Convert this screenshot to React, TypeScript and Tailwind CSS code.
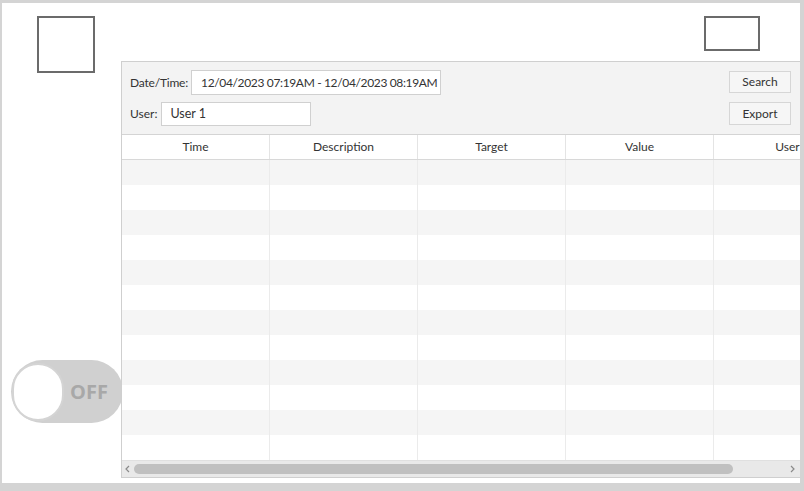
import React from "react";

const cols = ["Time", "Description", "Target", "Value", "User"];
const rows = Array.from({ length: 12 });

export default function App() {
  return (
    <div
      className="w-[804px] h-[491px] bg-[#d4d4d4] pt-[3px] pl-[2px] pr-[4px] pb-[8px] overflow-hidden"
      style={{ fontFamily: 'Lato, "Noto Sans", Arial, sans-serif' }}
    >
      <div className="relative w-full h-full bg-white overflow-hidden">
        {/* top-left square */}
        <div className="absolute left-[35px] top-[13px] w-[58px] h-[57px] border-2 border-[#6b6b6b]" />
        {/* top-right rect */}
        <div className="absolute left-[702px] top-[13px] w-[56px] h-[35px] border-2 border-[#6b6b6b]" />

        {/* toggle */}
        <div className="absolute left-[9px] top-[357px] w-[112px] h-[63px] rounded-full bg-[#d0d0d0] flex items-center pl-[1px]">
          <div className="w-[52px] h-[58px] rounded-full bg-white border-[2px] border-[#d4d4d4]" />
          <span
            className="ml-[6px] text-[20px] font-bold text-[#a8a8a8]"
            style={{ fontFamily: '"Open Sans", Arial, sans-serif' }}
          >
            OFF
          </span>
        </div>

        {/* panel */}
        <div className="absolute left-[119px] top-[58px] w-[680px] h-[417px] border border-[#cfcfcf] bg-[#f3f3f3] flex flex-col text-[12px] text-[#333]">
          {/* toolbar */}
          <div className="h-[73px] shrink-0 flex justify-between pl-[8px] pr-[9px] pt-[8px] border-b border-[#d4d4d4]">
            <div className="flex flex-col gap-[7px]">
              <div className="flex items-center gap-[3px] h-[25px] whitespace-nowrap">
                <span className="shrink-0 tracking-[-0.2px]">Date/Time:</span>
                <div className="w-[250px] h-[25px] shrink-0 bg-white border border-[#d0d0d0] flex items-center px-[9px] text-[12px] tracking-[-0.35px]">
                  12/04/2023 07:19AM - 12/04/2023 08:19AM
                </div>
              </div>
              <div className="flex items-center gap-[4px] h-[24px] whitespace-nowrap">
                <span className="shrink-0">User:</span>
                <div className="w-[150px] h-[24px] shrink-0 bg-white border border-[#d0d0d0] flex items-center px-[8px] text-[12.5px]">
                  User 1
                </div>
              </div>
            </div>
            <div className="flex flex-col gap-[9px] pt-[1px]">
              <div className="w-[62px] h-[22px] bg-[#f6f6f6] border border-[#d6d6d6] flex items-center justify-center">
                Search
              </div>
              <div className="w-[62px] h-[23px] bg-[#f6f6f6] border border-[#d6d6d6] flex items-center justify-center">
                Export
              </div>
            </div>
          </div>

          {/* table */}
          <div className="flex-1 bg-white flex flex-col overflow-hidden">
            <div className="flex h-[25px] border-b border-[#d8d8d8] shrink-0">
              {cols.map((c) => (
                <div
                  key={c}
                  className="w-[148px] shrink-0 flex items-center justify-center border-r border-[#e4e4e4]"
                >
                  {c}
                </div>
              ))}
            </div>
            <div className="flex-1 overflow-hidden">
              {rows.map((_, i) => (
                <div
                  key={i}
                  className={`flex h-[25px] ${i % 2 === 0 ? "bg-[#f5f5f5]" : "bg-white"}`}
                >
                  {cols.map((c) => (
                    <div key={c} className="w-[148px] shrink-0 border-r border-[#ebebeb]" />
                  ))}
                </div>
              ))}
            </div>
            {/* scrollbar */}
            <div className="h-[17px] shrink-0 bg-[#e9e9e9] border-t border-[#e0e0e0] flex items-center">
              <svg width="12" height="16" viewBox="0 0 12 16" className="shrink-0">
                <path d="M7 5 L4 8 L7 11" fill="none" stroke="#8a8a8a" strokeWidth="1.2" />
              </svg>
              <div className="w-[599px] h-[10px] rounded-full bg-[#c0c0c0] shrink-0" />
              <div className="flex-1" />
              <svg width="12" height="16" viewBox="0 0 12 16" className="shrink-0 mr-[2px]">
                <path d="M5 5 L8 8 L5 11" fill="none" stroke="#8a8a8a" strokeWidth="1.2" />
              </svg>
            </div>
          </div>
        </div>
      </div>
    </div>
  );
}
